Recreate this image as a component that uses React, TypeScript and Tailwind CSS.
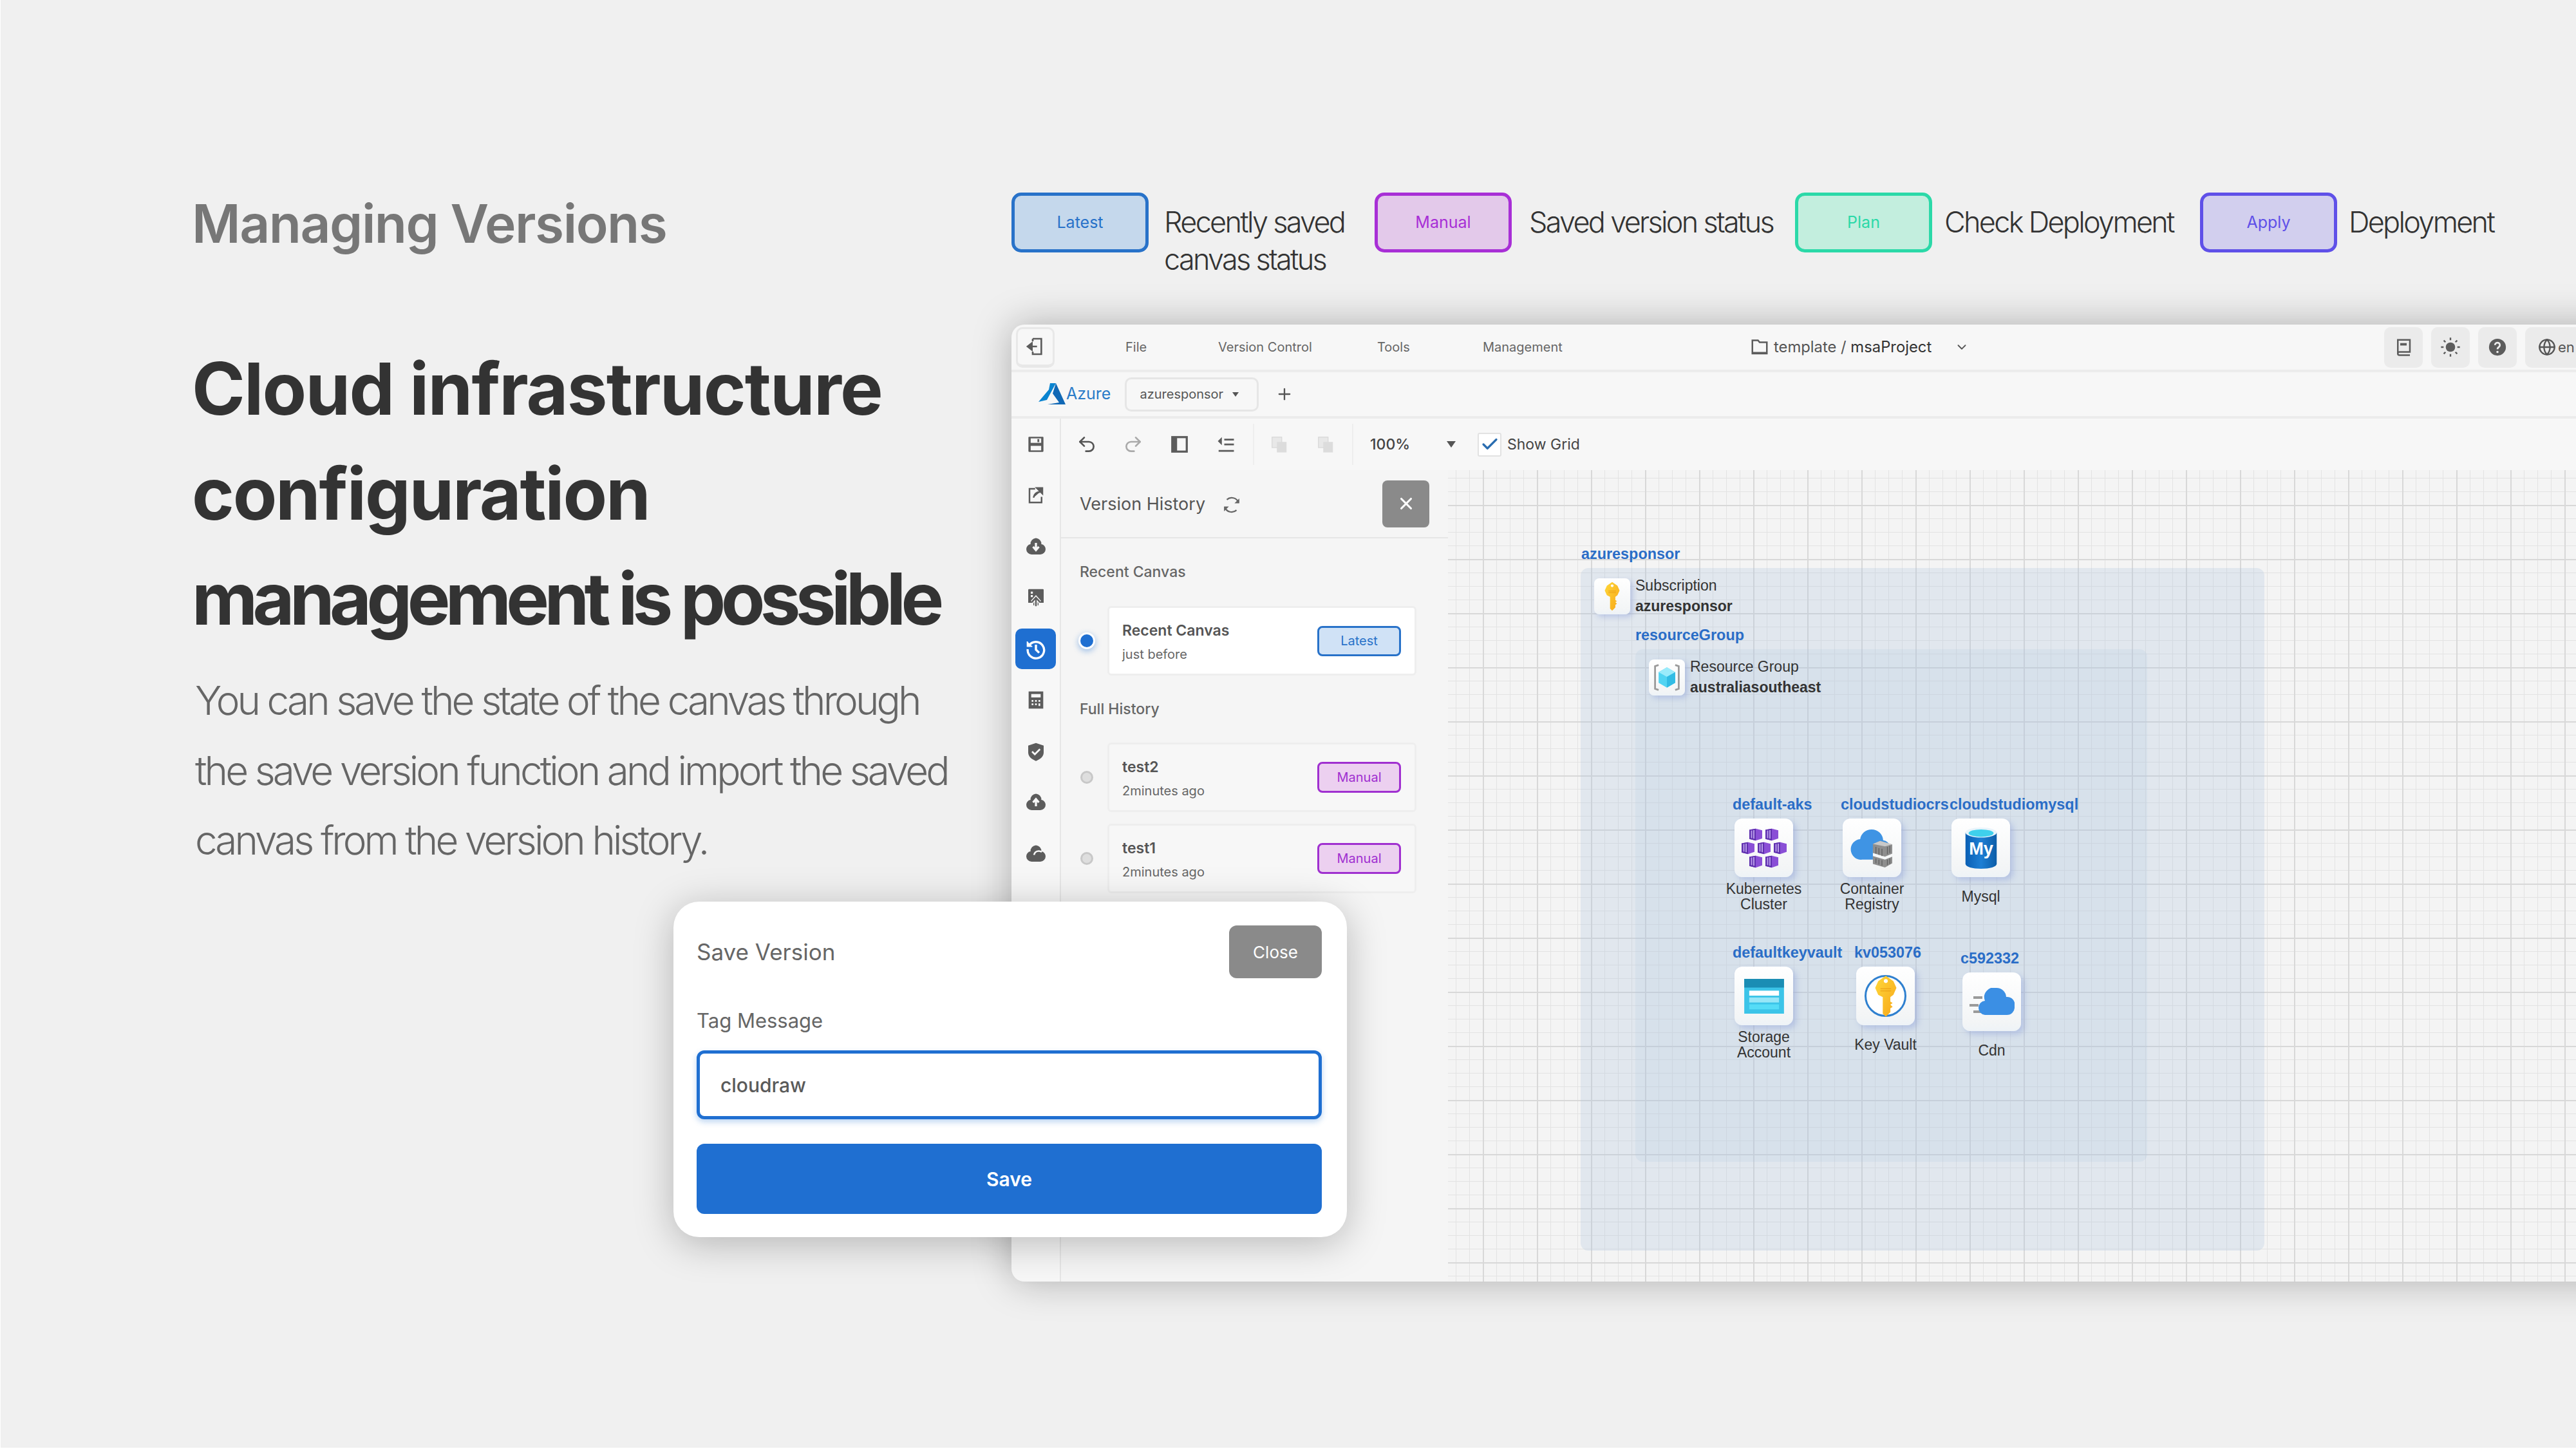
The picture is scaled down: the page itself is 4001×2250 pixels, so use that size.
import React from "react";
import { Globe, ChevronDown, Plus, X, Undo2, Redo2, Check } from "lucide-react";

const G = "#5c5c5c";

function Ico({ children, className = "w-[36px] h-[36px]", vb = "0 0 24 24" }: { children: React.ReactNode; className?: string; vb?: string }) {
  return <svg viewBox={vb} className={className} fill="none">{children}</svg>;
}

function ExitIcon() {
  return (
    <Ico className="w-[32px] h-[32px]">
      <path d="M9 3h10v18H9v-3M9 6V3" stroke={G} strokeWidth="2" />
      <path d="M4 12h10M8 8l-5 4 5 4z" stroke={G} strokeWidth="2" fill={G} />
    </Ico>
  );
}
function SaveIcon() {
  return (
    <Ico className="w-[28px] h-[28px]">
      <path d="M3 2h18a1 1 0 0 1 1 1v18a1 1 0 0 1-1 1H3a1 1 0 0 1-1-1V3a1 1 0 0 1 1-1z" fill={G} />
      <rect x="5" y="4" width="14" height="6" fill="#f7f7f7" />
      <rect x="14" y="5" width="2.4" height="4" fill={G} />
      <rect x="5" y="14" width="14" height="6" fill="#f7f7f7" />
    </Ico>
  );
}
function ShareIcon() {
  return (
    <Ico className="w-[30px] h-[30px]">
      <path d="M11 4H4v17h15v-7" stroke={G} strokeWidth="2" />
      <path d="M9 15c1-5 4-7 8-7M13 3h7v7z" stroke={G} strokeWidth="2" fill={G} />
    </Ico>
  );
}
function CloudIcon({ arrow }: { arrow: "down" | "up" | "none" }) {
  return (
    <Ico>
      <path d="M12 3a6 6 0 0 1 5.6 6.4A5 5 0 0 1 22 14.5a5.5 5.5 0 0 1-5.5 5.5h-9A5.5 5.5 0 0 1 2 14.5a5 5 0 0 1 4.4-5.1A6 6 0 0 1 12 3z" fill={G} />
      {arrow === "down" && <path d="M12 8v6M9 12l3 3.5 3-3.5" stroke="#f7f7f7" strokeWidth="2.2" />}
      {arrow === "up" && <path d="M12 16v-6M9 12l3-3.5 3 3.5" stroke="#f7f7f7" strokeWidth="2.2" />}
      {arrow === "none" && <path d="M10 13a5 5 0 0 1 5-4 5 5 0 0 1 3 1" stroke="#f7f7f7" strokeWidth="1.8" />}
    </Ico>
  );
}
function ImageUpIcon() {
  return (
    <Ico className="w-[32px] h-[32px]">
      <path d="M4 2h16a1 1 0 0 1 1 1v15h-6v3H9v-3H3V3a1 1 0 0 1 1-1z" fill={G} />
      <path d="M12 22v-9M7.5 17l4.5-5 4.5 5" stroke="#f7f7f7" strokeWidth="4" />
      <path d="M12 22v-9M7.5 17l4.5-5 4.5 5" stroke={G} strokeWidth="1.8" />
      <rect x="6" y="5" width="2.4" height="2.4" fill="#f7f7f7" />
      <rect x="6" y="9" width="2.4" height="2.4" fill="#f7f7f7" />
    </Ico>
  );
}
function HistoryIcon() {
  return (
    <Ico className="w-[34px] h-[34px]">
      <path d="M4.5 8A9 9 0 1 1 3 12" stroke="#fff" strokeWidth="2.4" />
      <path d="M2.5 3.5V9h5.5" fill="#fff" stroke="#fff" strokeWidth="1.2" />
      <path d="M12 7v5.5l3.5 3.5" stroke="#fff" strokeWidth="2.4" />
    </Ico>
  );
}
function CalcIcon() {
  return (
    <Ico className="w-[32px] h-[32px]">
      <rect x="3.5" y="2" width="17" height="20" fill={G} />
      <rect x="6.5" y="5" width="11" height="4" fill="#f7f7f7" />
      <path d="M7 12h2v2H7zM11 12h2v2h-2zM15 12h2v2h-2zM7 16h2v2H7zM11 16h2v2h-2zM15 16h2v3h-2z" fill="#f7f7f7" />
    </Ico>
  );
}
function ShieldIcon() {
  return (
    <Ico className="w-[32px] h-[32px]">
      <path d="M12 2l9 3v8c0 5-4 8-9 10-5-2-9-5-9-10V5z" fill={G} />
      <path d="M7.5 12l3.2 3.2 6-6" stroke="#f7f7f7" strokeWidth="2" />
    </Ico>
  );
}
function RefreshIcon() {
  return (
    <Ico className="w-[30px] h-[30px]">
      <path d="M6 5.5A9 9 0 0 1 20.5 9M18 18.5A9 9 0 0 1 3.5 15" stroke="#666666" strokeWidth="1.8" />
      <path d="M21.5 4v6h-6zM2.5 20v-6h6z" fill="#666666" />
    </Ico>
  );
}
function PanelIcon() {
  return (
    <Ico className="w-[30px] h-[30px]">
      <rect x="3" y="3" width="18" height="18" stroke={G} strokeWidth="2.6" />
      <rect x="3" y="3" width="6" height="18" fill={G} />
    </Ico>
  );
}
function IndentIcon() {
  return (
    <Ico className="w-[30px] h-[30px]">
      <path d="M10 6h12M10 12h12M3 20h19" stroke={G} strokeWidth="2.2" />
      <path d="M7 3L2 8l5 5z" fill={G} />
    </Ico>
  );
}
function LayerIcon() {
  return (
    <Ico className="w-[30px] h-[30px]">
      <rect x="3" y="3" width="12" height="13" fill="#e8e8e8" stroke="#d8d8d8" />
      <rect x="9" y="9" width="12" height="13" fill="#dcdcdc" />
    </Ico>
  );
}
function FolderIcon() {
  return (
    <Ico className="w-[30px] h-[30px]">
      <path d="M3 5V3.5h7L12 6h9v14H3z" stroke={G} strokeWidth="2" />
      <path d="M3 18h18v2.5H3z" fill={G} />
    </Ico>
  );
}
function BookIcon() {
  return (
    <Ico className="w-[30px] h-[30px]">
      <path d="M5 3h15v15H7a2 2 0 0 0-2 2z" stroke={G} strokeWidth="2" fill="none" />
      <path d="M5 20a2 2 0 0 0 2 2h13" stroke={G} strokeWidth="2" />
      <rect x="8" y="7" width="8" height="3" fill={G} />
    </Ico>
  );
}
function SunIcon() {
  return (
    <Ico className="w-[32px] h-[32px]">
      <circle cx="12" cy="12" r="5.5" fill={G} />
      <path d="M12 1v3M12 20v3M1 12h3M20 12h3M4.2 4.2l2 2M17.8 17.8l2 2M19.8 4.2l-2 2M6.2 17.8l-2 2" stroke={G} strokeWidth="1.8" />
    </Ico>
  );
}
function HelpIcon() {
  return (
    <Ico className="w-[30px] h-[30px]">
      <circle cx="12" cy="12" r="10.5" fill={G} />
      <path d="M9 9.5a3 3 0 1 1 4.6 2.5c-1 .7-1.6 1.2-1.6 2.5" stroke="#eee" strokeWidth="2.2" />
      <circle cx="12" cy="18" r="1.4" fill="#eee" />
    </Ico>
  );
}
function AzureLogo() {
  return (
    <svg viewBox="0 0 42 34" className="h-[34px] w-[42px]">
      <path d="M18 0h9L13 26l-13 3L16 10z" fill="#0a84d0" />
      <path d="M27 0l15 33H14l18-3-10-14z" fill="#1168b5" />
    </svg>
  );
}

function KeyGlyph({ className = "w-[30px] h-[46px]", id = "gk" }: { className?: string; id?: string }) {
  return (
    <svg viewBox="0 0 30 56" className={className}>
      <defs>
        <linearGradient id={id} x1="0" y1="0" x2="1" y2="1">
          <stop offset="0" stopColor="#ffd83a" />
          <stop offset="1" stopColor="#f7a618" />
        </linearGradient>
      </defs>
      <path d={"M15 1l10 7 4 9-4 9-4 3v6l3 2-3 2 3 3-3 2v5l-6 6-4-4V29l-6-3-4-9 4-9z"} fill={`url(#${id})`} />
      <circle cx="15" cy="8" r="2.6" fill="#fff" />
      <path d="M8 18h14M8 21h14" stroke="#e89a12" strokeWidth="1" />
    </svg>
  );
}
function RgGlyph() {
  return (
    <svg viewBox="0 0 44 50" className="h-[46px] w-[42px]">
      <path d="M8 4L2 6v38l6 2M36 4l6 2v38l-6 2" stroke="#9a9a9a" strokeWidth="3" fill="none" />
      <path d="M22 8l14 8v18l-14 8-14-8V16z" fill="#52d4f2" />
      <path d="M22 8l14 8-14 8-14-8z" fill="#9bebfb" />
      <path d="M22 24v18l14-8V16z" fill="#32bce4" />
    </svg>
  );
}
function Cube({ x, y }: { x: number; y: number }) {
  return (
    <g transform={`translate(${x} ${y})`}>
      <path d="M0 2l10-2 10 3v15l-10 4-10-3z" fill="#8a4fd6" />
      <path d="M0 2l10-2v22l-10-3z" fill="#5e2fae" />
      <path d="M2.5 3.5l2-.4v14.6l-2-.5zM6 2.8l2-.4v16.4l-2-.6z" fill="#b79be8" />
    </g>
  );
}
function AksGlyph() {
  return (
    <svg viewBox="0 0 70 74" preserveAspectRatio="none" className="h-[62px] w-[70px]">
      <Cube x={12} y={1} /><Cube x={37} y={1} />
      <Cube x={0} y={26} /><Cube x={25} y={26} /><Cube x={50} y={26} />
      <Cube x={12} y={51} /><Cube x={37} y={51} />
    </svg>
  );
}
function AcrGlyph() {
  return (
    <svg viewBox="0 0 70 66" className="h-[62px] w-[70px]">
      <path d="M34 2a19 19 0 0 1 19 18 13 13 0 0 1 11 10v5H36v17H18A17 17 0 0 1 15 18 19 19 0 0 1 34 2z" fill="#3f94e4" />
      <path d="M36 26l12-5 20 6v15l-12 5-20-6z" fill="#8e8e8e" />
      <path d="M36 46l20 6 12-5v11l-12 7-20-6z" fill="#8e8e8e" />
      <path d="M36 26l12-5 20 6-12 3z" fill="#c9c9c9" />
      <path d="M41 31v11M46 33v11M51 34v12M60 31v12M64 29v12M41 50v8M46 52v8M51 53v9M60 52v9M64 50v9" stroke="#606060" strokeWidth="1.4" />
    </svg>
  );
}
function MysqlGlyph() {
  return (
    <svg viewBox="0 0 50 66" className="h-[64px] w-[50px]">
      <defs>
        <linearGradient id="my" x1="0" x2="1">
          <stop offset="0" stopColor="#0a5fb4" />
          <stop offset="0.5" stopColor="#1e7fd4" />
          <stop offset="1" stopColor="#0c5da8" />
        </linearGradient>
      </defs>
      <path d="M0 8v50c0 5 11 8 25 8s25-3 25-8V8z" fill="url(#my)" />
      <ellipse cx="25" cy="8" rx="25" ry="8" fill="#e8f4fb" />
      <ellipse cx="25" cy="9" rx="20" ry="6" fill="#3fd0ec" />
      <text x="25" y="43" textAnchor="middle" fontFamily="Liberation Sans" fontWeight="700" fontSize="28" fill="#fff">My</text>
    </svg>
  );
}
function StorageGlyph() {
  return (
    <svg viewBox="0 0 64 56" className="h-[54px] w-[64px]">
      <rect width="64" height="56" fill="#3cc4e8" />
      <rect width="64" height="14" fill="#1a8db4" />
      <rect x="8" y="19" width="48" height="8" fill="#fff" />
      <rect x="8" y="30" width="48" height="8" fill="#97e6f7" />
      <rect x="8" y="41" width="48" height="8" fill="#55dcf7" />
    </svg>
  );
}
function VaultGlyph() {
  return (
    <div className="flex h-[65px] w-[65px] items-center justify-center rounded-full border-[3px] border-[#2f80cf] bg-white">
      <KeyGlyph className="h-[66px] w-[36px]" id="gk2" />
    </div>
  );
}
function CdnGlyph() {
  return (
    <svg viewBox="0 0 70 44" className="h-[44px] w-[70px]">
      <path d="M6 15h14M0 27h14M6 37h14" stroke="#9a9a9a" strokeWidth="4" />
      <path d="M42 0a15 15 0 0 1 15 14 12 12 0 0 1 13 15 12 12 0 0 1-12 13H24a11 11 0 0 1-10-11 11 11 0 0 1 10-11 15 15 0 0 1 18-20z" fill="#3b8fe4" />
    </svg>
  );
}

function LegendTag({ label, boxClass, textClass }: { label: string; boxClass: string; textClass: string }) {
  return (
    <div className={"flex h-[93px] w-[213px] shrink-0 items-center justify-center rounded-[15px] border-[5px] text-[25px] " + boxClass + " " + textClass}>
      {label}
    </div>
  );
}

function LegendText({ children, className }: { children: React.ReactNode; className: string }) {
  return (
    <div className={"shrink-0 whitespace-nowrap pt-[17px] text-[45px] font-light leading-[58px] tracking-[-0.06em] text-[#333333] " + className}>
      {children}
    </div>
  );
}

function VersionRow({ title, sub, tag, selected }: { title: string; sub: string; tag: "Latest" | "Manual"; selected?: boolean }) {
  return (
    <div className="flex items-center">
      {selected ? (
        <div className="ml-[1px] flex h-[20px] w-[20px] shrink-0 items-center justify-center rounded-full bg-[#1f6fd1] shadow-[0_0_0_3px_#ffffff,0_3px_8px_4px_rgba(31,111,209,0.35)]" />
      ) : (
        <div className="ml-[1px] h-[20px] w-[20px] shrink-0 rounded-full border-[3px] border-[#c8c8c8] bg-[#dedede]" />
      )}
      <div className={"ml-[22px] flex h-[108px] w-[480px] items-center justify-between rounded-[6px] border-[3px] border-[#eeeeee] pl-[20px] pr-[21px] " + (selected ? "bg-white" : "bg-[#f7f7f7]")}>
        <div className="pt-[5px]">
          <div className="text-[23px] font-semibold leading-[37px] text-[#555555]">{title}</div>
          <div className="text-[20px] leading-[37px] text-[#666666]">{sub}</div>
        </div>
        {tag === "Latest" ? (
          <div className="flex h-[47px] w-[130px] items-center justify-center rounded-[8px] border-[3px] border-[#2872c9] bg-[#d0e2f6] text-[20px] text-[#2872c9]">Latest</div>
        ) : (
          <div className="flex h-[48px] w-[130px] items-center justify-center rounded-[8px] border-[3px] border-[#a030d0] bg-[#ecd0f0] text-[20px] text-[#a030d0]">Manual</div>
        )}
      </div>
    </div>
  );
}

function BigNode({ label, caption, className, children }: { label: string; caption: React.ReactNode; className: string; children: React.ReactNode }) {
  return (
    <div className={"absolute flex w-[91px] flex-col items-center " + className}>
      <div className="-ml-[3px] self-start whitespace-nowrap text-[23.4px] font-bold leading-[28px] text-[#2a6dc7]">{label}</div>
      <div className="mt-[8px] flex h-[91px] w-[91px] items-center justify-center rounded-[12px] bg-[linear-gradient(180deg,#ffffff,#f3f5f6_85%,#eef3f7)] shadow-[5px_5px_10px_rgba(130,150,215,0.4)]">
        {children}
      </div>
      <div className="mt-[6px] flex h-[48px] items-center whitespace-nowrap text-center text-[23px] leading-[24px] text-[#333333]">
        <div>{caption}</div>
      </div>
    </div>
  );
}

function SmallIconBox({ children }: { children: React.ReactNode }) {
  return (
    <div className="flex h-[56px] w-[56px] shrink-0 items-center justify-center rounded-[8px] bg-[linear-gradient(180deg,#ffffff,#f3f5f6_85%,#eef3f7)] shadow-[4px_4px_8px_rgba(130,150,215,0.4)]">
      {children}
    </div>
  );
}

export default function App() {
  return (
    <div className="relative flex h-[2250px] w-[4001px] overflow-hidden border-b-[2px] border-l-[1px] border-white bg-[#f0f0f0] font-['Inter',sans-serif]">
      {/* Left column */}
      <div className="w-[1570px] shrink-0 pl-[297px] pt-[299px]">
        <div className="whitespace-nowrap text-[82px] font-semibold leading-[98px] tracking-[-0.018em] text-[#777777]">Managing Versions</div>
        <div className="mt-[125px] whitespace-nowrap text-[112px] font-bold leading-[163px] text-[#333333]">
          <div className="tracking-[-0.016em]">Cloud infrastructure</div>
          <div className="tracking-[-0.02em]">configuration</div>
          <div className="tracking-[-0.068em]">management is possible</div>
        </div>
        <div className="ml-[5px] mt-[23px] whitespace-nowrap text-[62px] font-light leading-[108.5px] tracking-[-0.063em] text-[#666666]">
          <div>You can save the state of the canvas through</div>
          <div>the save version function and import the saved</div>
          <div>canvas from the version history.</div>
        </div>
      </div>

      {/* Right column */}
      <div className="flex shrink-0 flex-col pt-[299px]">
        <div className="flex h-[205px] items-start">
          <LegendTag label="Latest" boxClass="border-[#2872c9] bg-[#c5d8ec]" textClass="text-[#2872c9]" />
          <LegendText className="ml-[24px] w-[327px]">
            <div>Recently saved</div>
            <div>canvas status</div>
          </LegendText>
          <LegendTag label="Manual" boxClass="border-[#a82fd6] bg-[#e3c9ea]" textClass="text-[#a82fd6]" />
          <LegendText className="ml-[27px] w-[413px]">Saved version status</LegendText>
          <LegendTag label="Plan" boxClass="border-[#2bd9a8] bg-[#c3eede]" textClass="text-[#2bd9a8]" />
          <LegendText className="ml-[19px] w-[397px]">Check Deployment</LegendText>
          <LegendTag label="Apply" boxClass="border-[#5f50e8] bg-[#d2cfee]" textClass="text-[#5f50e8]" />
          <LegendText className="ml-[18px]">Deployment</LegendText>
        </div>

        {/* App window */}
        <div className="flex h-[1486px] w-[2520px] flex-col overflow-hidden rounded-l-[20px] bg-[#f7f7f7] shadow-[0_0_60px_rgba(0,0,0,0.28)]">
          {/* Menu bar */}
          <div className="flex h-[74px] shrink-0 items-center border-b-[4px] border-[#ececec] pl-[7px]">
            <div className="flex h-[63px] w-[60px] items-center justify-center rounded-[10px] border-[3px] border-b-[5px] border-[#e8e8e8] bg-[#f7f7f7]">
              <ExitIcon />
            </div>
            <div className="ml-[110px] w-[144px] text-[20px] text-[#666666]">File</div>
            <div className="w-[247px] text-[20px] text-[#666666]">Version Control</div>
            <div className="w-[164px] text-[20px] text-[#666666]">Tools</div>
            <div className="w-[415px] text-[20px] text-[#666666]">Management</div>
            <FolderIcon />
            <div className="ml-[7px] flex w-[291px] items-center whitespace-nowrap text-[23.8px] text-[#555555]">
              template /&nbsp;<span className="text-[#333333]">msaProject</span>
              <ChevronDown className="ml-[36px] h-[22px] w-[22px] shrink-0 text-[#555555]" />
            </div>
            <div className="ml-[657px] flex items-center gap-[13px]">
              <div className="flex h-[63px] w-[60px] items-center justify-center rounded-[10px] bg-[#ebebeb]"><BookIcon /></div>
              <div className="flex h-[63px] w-[60px] items-center justify-center rounded-[10px] bg-[#ebebeb]"><SunIcon /></div>
              <div className="flex h-[63px] w-[60px] items-center justify-center rounded-[10px] bg-[#ebebeb]"><HelpIcon /></div>
              <div className="flex h-[63px] w-[140px] items-center gap-[3px] rounded-[10px] bg-[#ebebeb] pl-[20px] text-[22px] text-[#555555]">
                <Globe className="h-[28px] w-[28px]" strokeWidth={2} />
                en
              </div>
            </div>
          </div>

          {/* Provider bar */}
          <div className="flex h-[72px] shrink-0 items-center border-b-[4px] border-[#ececec] pl-[42px]">
            <AzureLogo />
            <span className="ml-[1px] text-[25px] text-[#2a7bc8]">Azure</span>
            <div className="ml-[22px] flex h-[53px] w-[208px] items-center rounded-[10px] border-[3px] border-[#e6e6e6] pl-[20px] text-[20px] text-[#555555]">
              azuresponsor
              <span className="ml-[14px] border-x-[5px] border-t-[7px] border-x-transparent border-t-[#555555]" />
            </div>
            <Plus className="ml-[26px] h-[28px] w-[28px] text-[#555555]" strokeWidth={2} />
          </div>

          <div className="flex min-h-0 flex-1">
            {/* Sidebar */}
            <div className="flex w-[77px] shrink-0 flex-col items-center border-r-[2px] border-[#e6e6e6]">
              <div className="flex h-[79.5px] items-center"><SaveIcon /></div>
              <div className="flex h-[79.5px] items-center"><ShareIcon /></div>
              <div className="flex h-[79.5px] items-center"><CloudIcon arrow="down" /></div>
              <div className="flex h-[79.5px] items-center"><ImageUpIcon /></div>
              <div className="flex h-[79.5px] items-center">
                <div className="flex h-[63px] w-[63px] items-center justify-center rounded-[10px] bg-[#1f6fd1]"><HistoryIcon /></div>
              </div>
              <div className="flex h-[79.5px] items-center"><CalcIcon /></div>
              <div className="flex h-[79.5px] items-center"><ShieldIcon /></div>
              <div className="flex h-[79.5px] items-center"><CloudIcon arrow="up" /></div>
              <div className="flex h-[79.5px] items-center"><CloudIcon arrow="none" /></div>
            </div>

            <div className="flex min-w-0 flex-1 flex-col">
              {/* Toolbar */}
              <div className="flex h-[80px] shrink-0 items-center pl-[4px]">
                <div className="flex w-[72px] justify-center"><Undo2 className="h-[32px] w-[32px] text-[#555555]" strokeWidth={2} /></div>
                <div className="flex w-[72px] justify-center"><Redo2 className="h-[32px] w-[32px] text-[#aaaaaa]" strokeWidth={2} /></div>
                <div className="flex w-[72px] justify-center"><PanelIcon /></div>
                <div className="flex w-[72px] justify-center"><IndentIcon /></div>
                <div className="ml-[6px] h-[64px] w-[2px] bg-[#eeeeee]" />
                <div className="ml-[3px] flex w-[72px] justify-center"><LayerIcon /></div>
                <div className="flex w-[72px] justify-center"><LayerIcon /></div>
                <div className="ml-[5px] h-[64px] w-[2px] bg-[#eeeeee]" />
                <div className="ml-[26px] w-[119px] text-[23px] font-medium text-[#444444]">100%</div>
                <span className="border-x-[7px] border-t-[10px] border-x-transparent border-t-[#555555]" />
                <div className="ml-[34px] flex h-[37px] w-[37px] items-center justify-center rounded-[3px] border-[2px] border-[#e2e2e2] bg-white">
                  <Check className="h-[30px] w-[30px] text-[#2a6db0]" strokeWidth={2.6} />
                </div>
                <div className="ml-[9px] whitespace-nowrap text-[23px] text-[#444444]">Show Grid</div>
              </div>

              <div className="flex min-h-0 flex-1">
                {/* Version panel */}
                <div className="w-[601px] shrink-0 bg-[#f5f5f5] px-[29px]">
                  <div className="-mx-[29px] flex h-[106px] items-center border-b-[2px] border-[#e6e6e6] pl-[29px] pr-[29px]">
                    <span className="pt-[3px] text-[27px] text-[#555555]">Version History</span>
                    <span className="ml-[26px] pt-[3px]"><RefreshIcon /></span>
                    <div className="ml-auto flex h-[73px] w-[73px] items-center justify-center rounded-[8px] bg-[#8a8a8a]">
                      <X className="h-[30px] w-[30px] text-white" strokeWidth={2.5} />
                    </div>
                  </div>
                  <div className="mt-[36px] text-[23px] font-medium leading-[32px] text-[#666666]">Recent Canvas</div>
                  <div className="mt-[37px]"><VersionRow title="Recent Canvas" sub="just before" tag="Latest" selected /></div>
                  <div className="mt-[36px] text-[23px] font-medium leading-[32px] text-[#666666]">Full History</div>
                  <div className="mt-[36px] flex flex-col gap-[18px]">
                    <VersionRow title="test2" sub="2minutes ago" tag="Manual" />
                    <VersionRow title="test1" sub="2minutes ago" tag="Manual" />
                  </div>
                </div>

                {/* Canvas */}
                <div className="relative min-w-0 flex-1 bg-[#f4f4f4] bg-[linear-gradient(#d8d8d8_2px,transparent_2px),linear-gradient(90deg,#d8d8d8_2px,transparent_2px),linear-gradient(#e3e3e3_1px,transparent_1px),linear-gradient(90deg,#e3e3e3_1px,transparent_1px)] bg-size-[84px_84px,84px_84px,21px_21px,21px_21px] bg-position-[54px_54px,54px_54px,12px_12px,12px_12px] font-['Liberation_Sans',sans-serif]">
                  <div className="absolute left-[206px] top-[152px] h-[1060px] w-[1062px] rounded-[12px] bg-[rgba(170,195,222,0.26)]" />
                  <div className="absolute left-[291px] top-[278px] h-[796px] w-[795px] rounded-[12px] bg-[rgba(170,195,222,0.16)]" />

                  <div className="absolute left-[207px] top-[116px] text-[23.4px] font-bold leading-[28px] text-[#2a6dc7]">azuresponsor</div>
                  <div className="absolute left-[227px] top-[168px] flex gap-[8px]">
                    <SmallIconBox><KeyGlyph /></SmallIconBox>
                    <div className="-mt-[5px] whitespace-nowrap text-[23px] leading-[32px] text-[#333333]">
                      <div>Subscription</div>
                      <div className="font-bold">azuresponsor</div>
                    </div>
                  </div>
                  <div className="absolute left-[291px] top-[242px] text-[23.4px] font-bold leading-[28px] text-[#2a6dc7]">resourceGroup</div>
                  <div className="absolute left-[312px] top-[294px] flex gap-[8px]">
                    <SmallIconBox><RgGlyph /></SmallIconBox>
                    <div className="-mt-[5px] whitespace-nowrap text-[23px] leading-[32px] text-[#333333]">
                      <div>Resource Group</div>
                      <div className="font-bold">australiasoutheast</div>
                    </div>
                  </div>

                  <BigNode className="left-[445px] top-[505px]" label="default-aks" caption={<>Kubernetes<br />Cluster</>}><AksGlyph /></BigNode>
                  <BigNode className="left-[613px] top-[505px]" label="cloudstudiocrs" caption={<>Container<br />Registry</>}><AcrGlyph /></BigNode>
                  <BigNode className="left-[782px] top-[505px]" label="cloudstudiomysql" caption="Mysql"><MysqlGlyph /></BigNode>
                  <BigNode className="left-[445px] top-[735px]" label="defaultkeyvault" caption={<>Storage<br />Account</>}><StorageGlyph /></BigNode>
                  <BigNode className="left-[634px] top-[735px]" label="kv053076" caption="Key Vault"><VaultGlyph /></BigNode>
                  <BigNode className="left-[799px] top-[744px]" label="c592332" caption="Cdn"><CdnGlyph /></BigNode>
                </div>
              </div>
            </div>
          </div>
        </div>
      </div>

      {/* Save Version modal, floats over the window */}
      <div className="absolute left-[1045px] top-[1400px] w-[1046px] rounded-[40px] bg-white pb-[36px] pl-[36px] pr-[39px] pt-[37px] shadow-[0_10px_60px_rgba(0,0,0,0.25)]">
        <div className="flex h-[82px] items-center justify-between">
          <span className="text-[35px] text-[#666666]">Save Version</span>
          <div className="flex h-[82px] w-[144px] items-center justify-center rounded-[12px] bg-[#8a8a8a] text-[26px] text-white">Close</div>
        </div>
        <div className="mt-[46px] text-[31px] leading-[40px] text-[#666666]">Tag Message</div>
        <div className="mt-[26px] flex h-[107px] items-center rounded-[12px] border-[5px] border-[#1f6fd1] bg-white pl-[32px] pt-[2px] text-[30px] font-medium text-[#5a5a5a] shadow-[0_4px_10px_rgba(31,111,209,0.3)]">cloudraw</div>
        <div className="mt-[38px] flex h-[109px] items-center justify-center rounded-[12px] bg-[#1f6fd1] pt-[2px] text-[30px] font-semibold text-white">Save</div>
      </div>
    </div>
  );
}
